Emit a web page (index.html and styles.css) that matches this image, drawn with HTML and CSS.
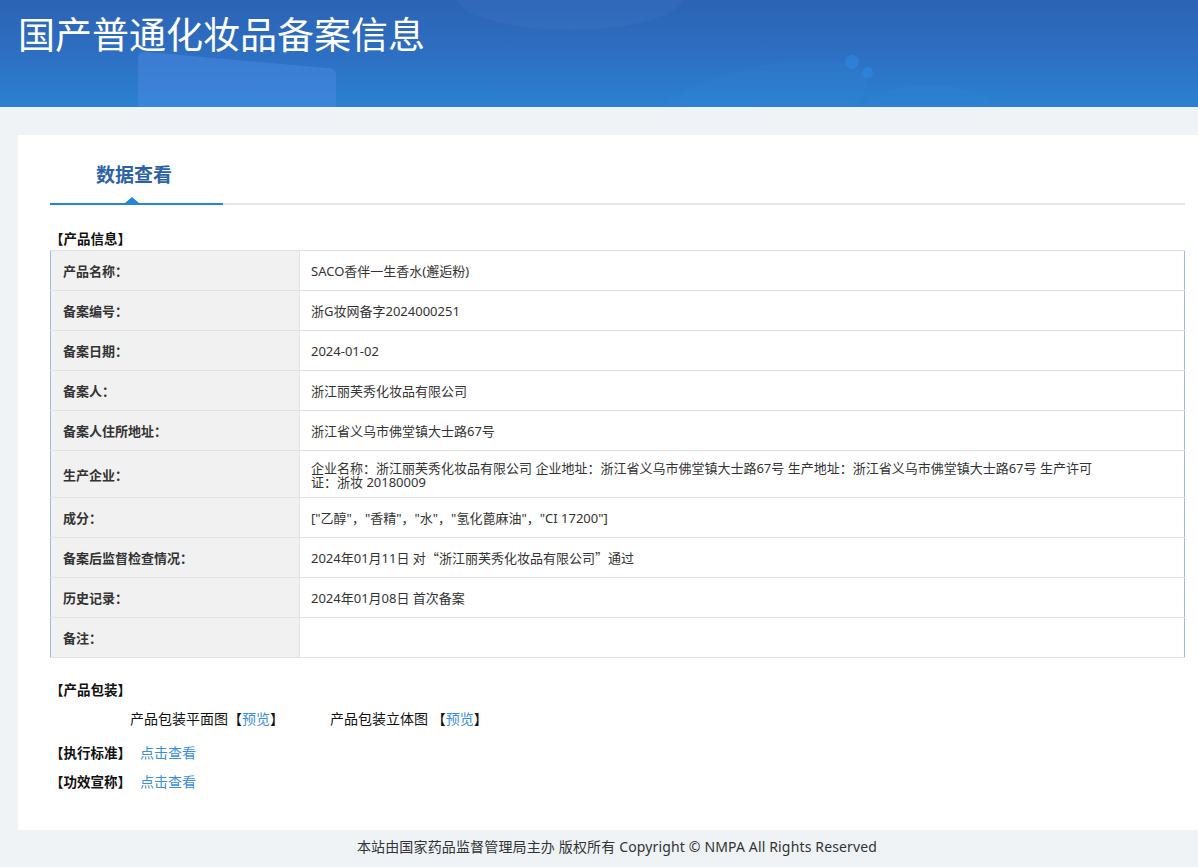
FILE: index.html
```html
<!DOCTYPE html>
<html lang="zh-CN">
<head>
<meta charset="utf-8">
<title>国产普通化妆品备案信息</title>
<link rel="stylesheet" href="styles.css">
</head>
<body>
<header class="banner">
  <span class="blob blob-a"></span>
  <span class="blob blob-b"></span>
  <span class="blob blob-c"></span>
  <span class="blob blob-d"></span>
  <span class="dot dot-a"></span>
  <span class="dot dot-b"></span>
  <h1 class="banner-title">国产普通化妆品备案信息</h1>
</header>

<main class="card">
  <div class="tabs">
    <div class="tab active">数据查看</div>
  </div>

  <h2 class="section-title">【产品信息】</h2>
  <table class="info">
    <tr><th>产品名称：</th><td>SACO香伴一生香水(邂逅粉)</td></tr>
    <tr><th>备案编号：</th><td>浙G妆网备字2024000251</td></tr>
    <tr><th>备案日期：</th><td>2024-01-02</td></tr>
    <tr><th>备案人：</th><td>浙江丽芙秀化妆品有限公司</td></tr>
    <tr><th>备案人住所地址：</th><td>浙江省义乌市佛堂镇大士路67号</td></tr>
    <tr class="tall"><th>生产企业：</th><td><div class="wrap">企业名称：浙江丽芙秀化妆品有限公司 企业地址：浙江省义乌市佛堂镇大士路67号 生产地址：浙江省义乌市佛堂镇大士路67号 生产许可证：浙妆 20180009</div></td></tr>
    <tr><th>成分：</th><td>["乙醇"，"香精"，"水"，"氢化蓖麻油"，"CI 17200"]</td></tr>
    <tr><th>备案后监督检查情况：</th><td>2024年01月11日 对<span class="cjk">“浙江丽芙秀化妆品有限公司”</span>通过</td></tr>
    <tr><th>历史记录：</th><td>2024年01月08日 首次备案</td></tr>
    <tr><th>备注：</th><td></td></tr>
  </table>

  <h2 class="section-title pack-title">【产品包装】</h2>
  <div class="pack-row">
    <span class="pack-item">产品包装平面图【<a class="link" href="#">预览</a>】</span>
    <span class="pack-item">产品包装立体图 【<a class="link" href="#">预览</a>】</span>
  </div>
  <div class="line-item first"><b>【执行标准】</b><a class="link" href="#">点击查看</a></div>
  <div class="line-item"><b>【功效宣称】</b><a class="link" href="#">点击查看</a></div>
</main>

<footer class="footer">本站由国家药品监督管理局主办 版权所有 Copyright © NMPA All Rights Reserved</footer>
</body>
</html>
```

FILE: styles.css
```css
* { box-sizing: border-box; }
html, body { margin: 0; padding: 0; }
body {
  background: #eff3f6;
  font-family: "Noto Sans", "Noto Sans CJK SC", sans-serif;
  font-size: 13px;
  color: #333;
}
.cjk { font-family: "Noto Sans CJK SC", sans-serif; }

.banner {
  position: relative;
  overflow: hidden;
  height: 107px;
  background: linear-gradient(180deg, #2c63b4 0%, #2d6fc2 50%, #2a81d1 100%);
  padding: 0 18px;
}
.blob { position: absolute; }
.blob-a {
  left: 138px; top: 60px; width: 198px; height: 70px;
  background: rgba(80, 140, 230, 0.42);
  transform: skewY(5deg);
  border-radius: 6px 6px 0 0;
}
.blob-b {
  left: 640px; top: 68px; width: 230px; height: 80px;
  border-radius: 50%;
  background: rgba(55, 145, 220, 0.14);
  transform: rotate(-14deg);
}
.blob-c {
  left: 455px; top: -40px; width: 230px; height: 70px;
  border-radius: 50%;
  background: rgba(90, 140, 215, 0.12);
}
.blob-d {
  left: 860px; top: 85px; width: 140px; height: 60px;
  border-radius: 50%;
  background: rgba(55, 145, 225, 0.12);
}
.dot { position: absolute; border-radius: 50%; background: rgba(45, 135, 225, 0.65); }
.dot-a { left: 845px; top: 55px; width: 14px; height: 14px; }
.dot-b { left: 862px; top: 67px; width: 11px; height: 11px; }
.banner-title {
  position: relative;
  margin: 0;
  padding-top: 10px;
  font-family: "Noto Sans CJK SC", sans-serif;
  font-size: 37px;
  font-weight: 400;
  line-height: 46px;
  color: #fff;
}

.card {
  background: #fff;
  margin: 28px 0 0 18px;
  padding: 0 13px 28px 32px;
  min-height: 695px;
}

.tabs {
  height: 70px;
  display: flex;
  align-items: flex-end;
  border-bottom: 2px solid #e6e6e6;
}
.tab {
  position: relative;
  width: 173px;
  height: 70px;
  padding-left: 46px;
  line-height: 78px;
  font-family: "Noto Sans CJK SC", sans-serif;
  font-size: 19px;
  font-weight: 700;
  color: #2b62a6;
  border-bottom: 2px solid #2585d8;
  margin-bottom: -2px;
}
.tab::after {
  content: "";
  position: absolute;
  left: 75px;
  bottom: 0;
  border-left: 7px solid transparent;
  border-right: 7px solid transparent;
  border-bottom: 6px solid #2585d8;
}

.section-title {
  margin: 24px 0 0;
  font-size: 13.5px;
  font-weight: 700;
  line-height: 20px;
  color: #111;
}

.info {
  width: 100%;
  border-collapse: collapse;
  border: 1px solid #9dbbe9;
  margin-top: 1px;
}
.info tr { height: 40px; }
.info tr.tall { height: 47px; }
.info th, .info td {
  border-top: 1px solid #e2e2e2;
  border-bottom: 1px solid #e2e2e2;
  padding: 0 12px;
  font-size: 13px;
  text-align: left;
  vertical-align: middle;
}
.info th {
  width: 249px;
  background: #f1f1f1;
  font-weight: 700;
  color: #333;
  border-right: 1px solid #e2e2e2;
}
.info td { color: #333; padding-left: 11px; }
.wrap { max-width: 805px; line-height: 14px; padding-top: 2px; }

.pack-title { margin-top: 22px; }
.pack-row {
  display: flex;
  gap: 46px;
  padding-left: 80px;
  margin-top: 9px;
  line-height: 20px;
  font-size: 14px;
  color: #111;
}
.line-item {
  margin-top: 9px;
  line-height: 20px;
  color: #111;
  font-size: 13.5px;
}
.line-item.first { margin-top: 14px; }
.line-item b { margin-right: 9px; }
.line-item .link { font-size: 14px; }
.link { color: #3b8ee0; text-decoration: none; }

.footer {
  text-align: center;
  padding: 6px 0 0 36px;
  height: 37px;
  font-size: 14px;
  letter-spacing: 0.15px;
  color: #333;
}
```
